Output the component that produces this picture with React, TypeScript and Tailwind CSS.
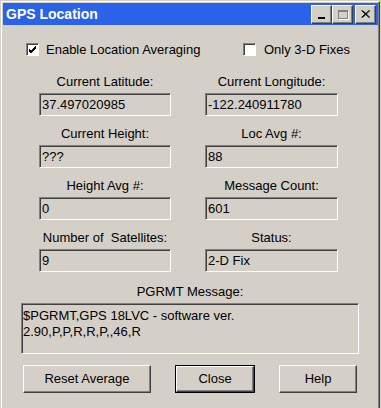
import React from "react";

const labels: [string, string][] = [
	["Current Latitude:", "37.497020985"],
	["Current Longitude:", "-122.240911780"],
	["Current Height:", "???"],
	["Loc Avg #:", "88"],
	["Height Avg #:", "0"],
	["Message Count:", "601"],
	["Number of  Satellites:", "9"],
	["Status:", "2-D Fix"],
];

function CheckBox({ checked }: { checked: boolean }) {
	return (
		<div className="w-[13px] h-[13px] bg-white border border-t-[#808080] border-l-[#808080] border-b-white border-r-white shadow-[inset_1px_1px_0_#404040] flex items-center justify-center shrink-0">
			{checked && (
				<svg width="9" height="9" viewBox="0 0 9 9">
					<path d="M1 4 L3 6 L8 1 M1 5 L3 7 L8 2 M1 6 L3 8 L8 3" stroke="#000" strokeWidth="1" fill="none" shapeRendering="crispEdges" />
				</svg>
			)}
		</div>
	);
}

function Field({ value }: { value: string }) {
	return (
		<div className="h-[23px] flex items-center pl-[2px] border border-t-[#808080] border-l-[#808080] border-b-white border-r-white shadow-[inset_1px_1px_0_#404040] text-black">
			{value}
		</div>
	);
}

function Button({ label, width, primary }: { label: string; width: string; primary?: boolean }) {
	const inner = (
		<div className="h-full w-full flex items-center justify-center border border-t-white border-l-white border-b-[#404040] border-r-[#404040] shadow-[inset_-1px_-1px_0_#808080]">
			{label}
		</div>
	);
	return (
		<div className={`h-[28px] ${width} ${primary ? "border border-black" : ""}`}>
			{inner}
		</div>
	);
}

function TitleButton({ children }: { children: React.ReactNode }) {
	return (
		<div className="w-[21px] h-[19px] bg-[#d4d0c8] border border-t-white border-l-white border-b-[#404040] border-r-[#404040] shadow-[inset_-1px_-1px_0_#808080] flex items-center justify-center">
			{children}
		</div>
	);
}

export default function App() {
	return (
		<div className="w-[381px] h-[408px] overflow-hidden bg-[#d4d0c8] pl-px pr-px pt-px text-[13px] leading-[16px] text-black" style={{ fontFamily: '"Liberation Sans", Arial, sans-serif' }}>
			<div className="h-full border-l border-t border-r border-l-white border-t-white border-r-[#404040] p-px shadow-[inset_-1px_0_0_#808080]">
				{/* Title bar */}
				<div className="h-[22px] bg-[#2a62ea] flex items-center justify-between pl-[3px] pr-[2px]">
					<span className="text-white font-bold text-[14px]">GPS Location</span>
					<div className="flex items-center">
						<TitleButton>
							<div className="w-[7px] h-[2px] bg-black mt-[8px] -ml-[1px]" />
						</TitleButton>
						<TitleButton>
							<div className="w-[10px] h-[9px] border border-[#808080] border-t-2 shadow-[1px_1px_0_#fff]" />
						</TitleButton>
						<div className="w-[2px]" />
						<TitleButton>
							<svg width="9" height="8" viewBox="0 0 9 8">
								<path d="M0.5 0.5 L8 7.5 M1.5 0.5 L9 7.5 M8 0.5 L0.5 7.5 M9 0.5 L1.5 7.5" stroke="#000" strokeWidth="1" fill="none" />
							</svg>
						</TitleButton>
					</div>
				</div>

				{/* Body */}
				<div className="flex flex-col">
					{/* Checkboxes */}
					<div className="flex items-center mt-[18px] h-[13px]">
						<div className="ml-[23px] w-[217px] flex items-center gap-[7px]">
							<CheckBox checked />
							<span>Enable Location Averaging</span>
						</div>
						<div className="flex items-center gap-[8px]">
							<CheckBox checked={false} />
							<span>Only 3-D Fixes</span>
						</div>
					</div>

					{/* Fields */}
					<div className="grid grid-cols-[132px_133px] gap-x-[34px] gap-y-[10px] ml-[36px] mt-[18px]">
						{labels.map(([label, value]) => (
							<div key={label} className="flex flex-col">
								<div className="text-center whitespace-pre">{label}</div>
								<div className="mt-[3px]">
									<Field value={value} />
								</div>
							</div>
						))}
					</div>

					{/* PGRMT */}
					<div className="ml-[18px] w-[338px] mt-[12px]">
						<div className="text-center">PGRMT Message:</div>
						<div className="mt-[3px] h-[51px] pt-[4px] pl-px border border-t-[#808080] border-l-[#808080] border-b-white border-r-white shadow-[inset_1px_1px_0_#404040]">
							<div>$PGRMT,GPS 18LVC - software ver.</div>
							<div>2.90,P,P,R,R,P,,46,R</div>
						</div>
					</div>

					{/* Buttons */}
					<div className="flex mt-[11px] ml-[20px] gap-[24px]">
						<Button label="Reset Average" width="w-[128px]" />
						<Button label="Close" width="w-[80px]" primary />
						<Button label="Help" width="w-[78px]" />
					</div>
				</div>
			</div>
		</div>
	);
}
